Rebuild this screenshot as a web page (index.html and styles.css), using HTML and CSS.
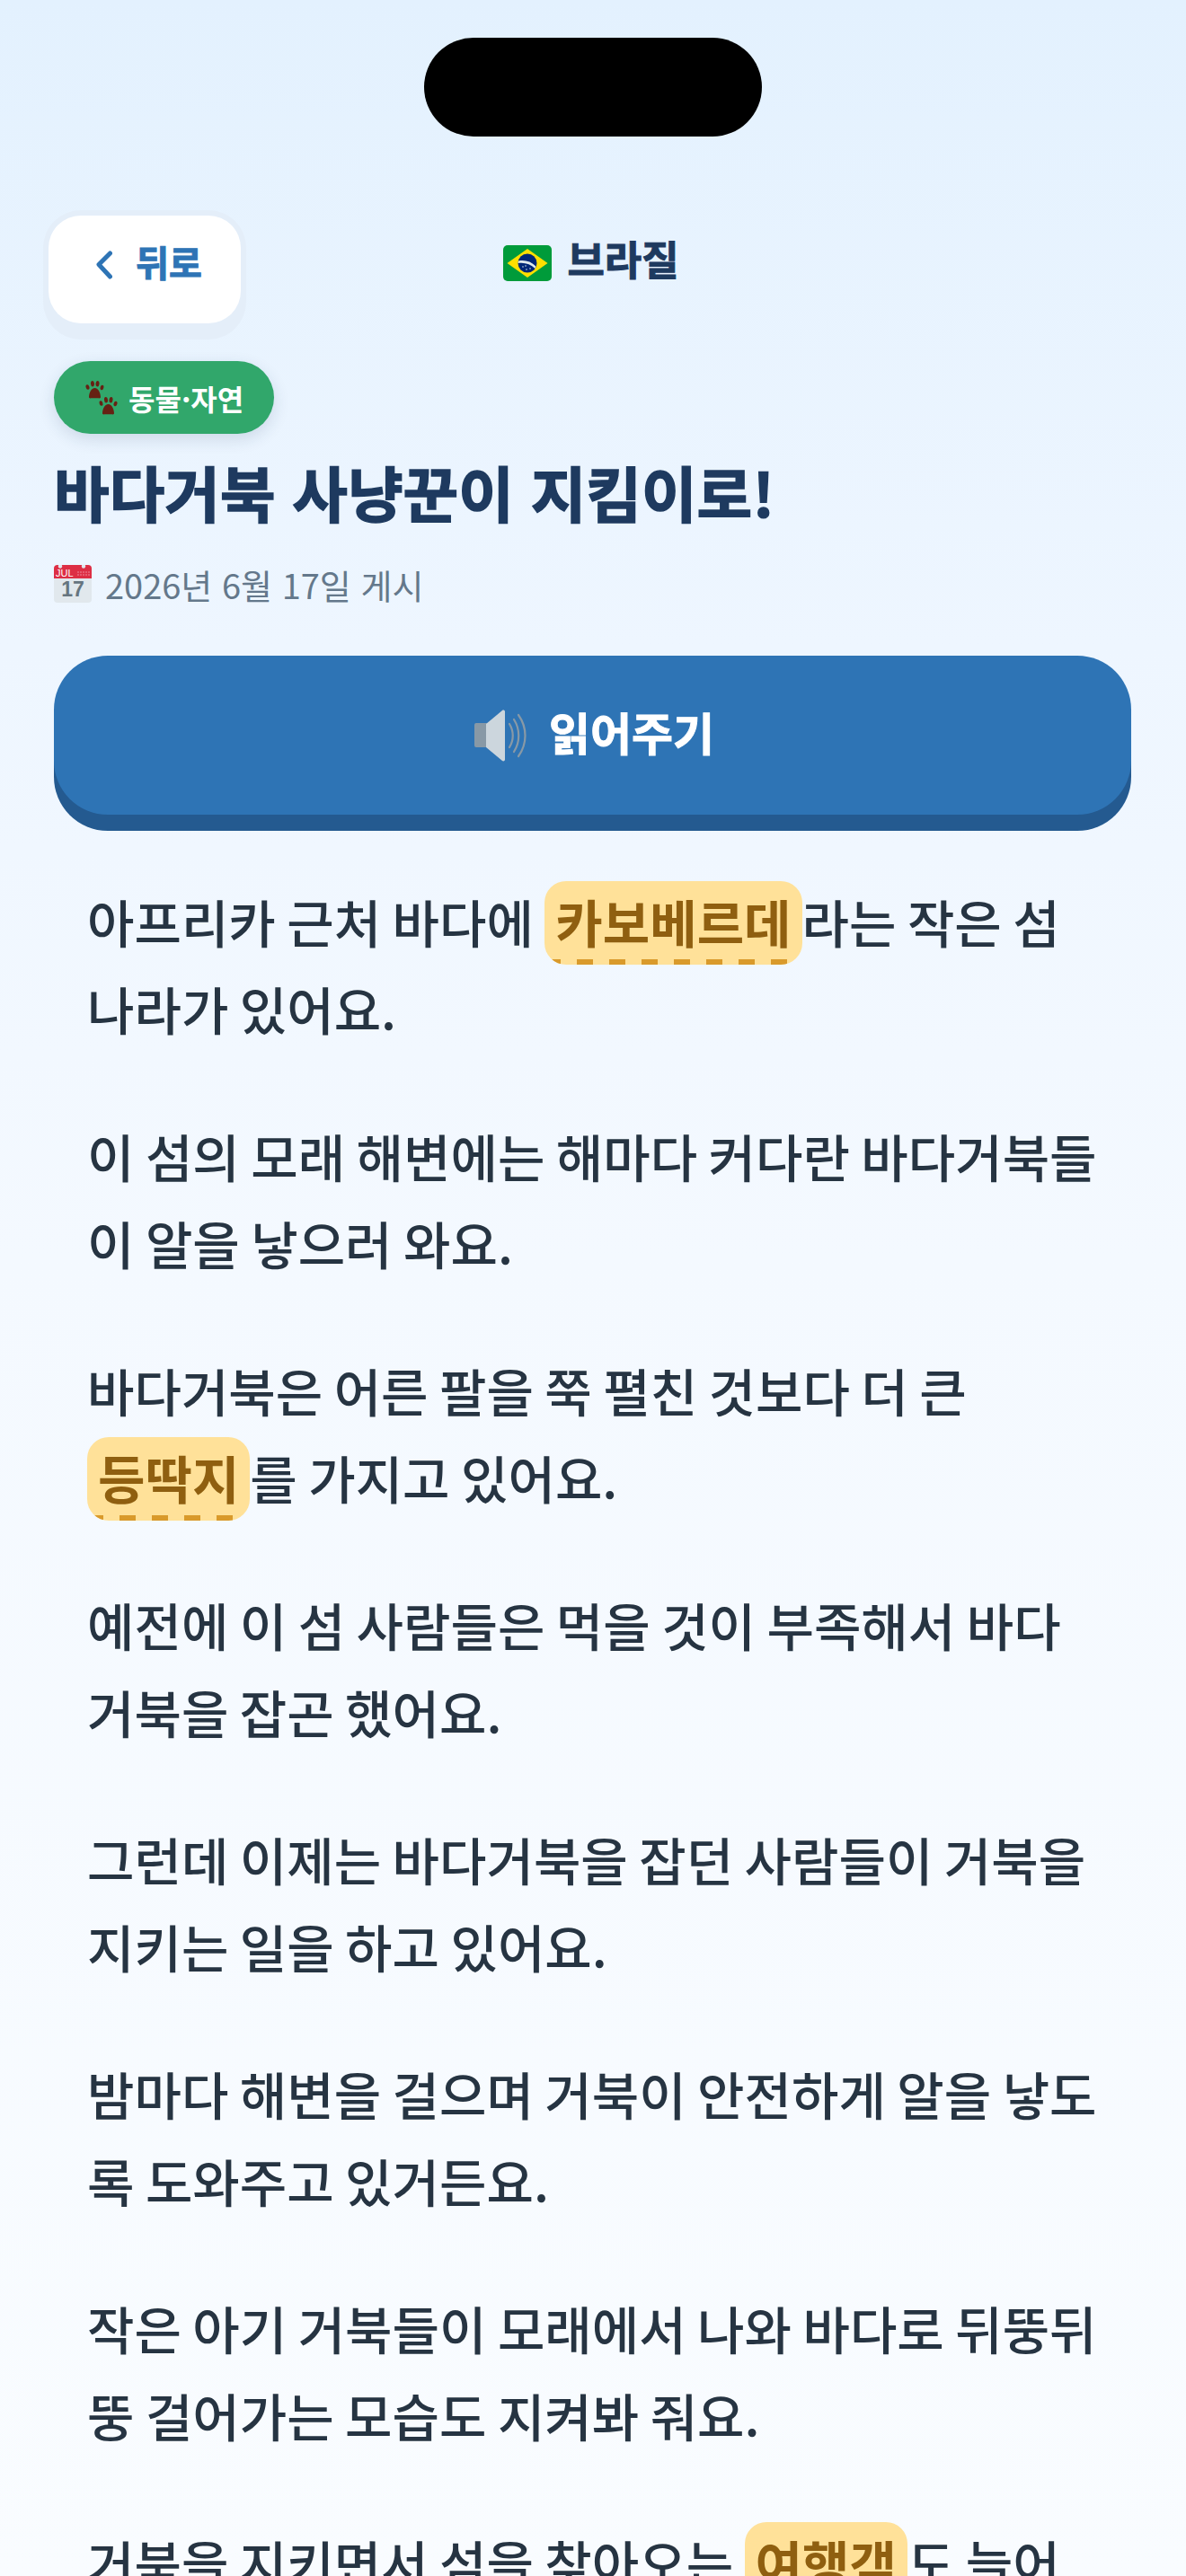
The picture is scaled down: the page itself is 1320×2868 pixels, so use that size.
FILE: index.html
```html
<!DOCTYPE html>
<html lang="ko">
<head>
<meta charset="utf-8">
<title>바다거북 사냥꾼이 지킴이로!</title>
<link rel="stylesheet" href="styles.css">
</head>
<body>
<div class="island"></div>
<main class="page">
  <header class="top">
    <a class="back">
      <svg class="chev" viewBox="0 0 18 32"><path d="M15.5 3 3 15.5 15.5 29"/></svg>
      <span>뒤로</span>
    </a>
    <div class="country">
      <svg class="flag" viewBox="0 0 54 40">
        <rect width="54" height="40" rx="5" fill="#009b3a"/>
        <path d="M27 4 49.500 20 27 36 4.500 20z" fill="#fedf00"/>
        <circle cx="27" cy="20" r="10.500" fill="#002776"/>
        <path d="M17 17.500c7-1.500 14 .5 19.500 6l-1 2.500c-5-5-11.500-7-19-6z" fill="#dfe8ec"/>
        <g fill="#cfe0ea"><circle cx="22" cy="24" r=".8"/><circle cx="26" cy="27" r=".8"/><circle cx="30" cy="26" r=".8"/><circle cx="25" cy="23" r=".8"/></g>
      </svg>
      <span>브라질</span>
    </div>
    <div class="spacer"></div>
  </header>

  <div class="pill">
    <svg class="paw" viewBox="0 0 36 38" fill="#662113">
      <g>
        <ellipse cx="2.500" cy="7" rx="1.900" ry="2.800" transform="rotate(-18 2.500 7)"/>
        <ellipse cx="8" cy="3.200" rx="2" ry="3.200" transform="rotate(-6 8 3.200)"/>
        <ellipse cx="13.500" cy="3.200" rx="2" ry="3.200" transform="rotate(6 13.500 3.200)"/>
        <ellipse cx="18.500" cy="7.500" rx="1.900" ry="2.800" transform="rotate(18 18.500 7.500)"/>
        <path d="M10.500 8c4 0 6.500 6 6.500 10 0 1.500-1 1.500-3 1.300-2-.2-5-.2-7 0-2 .2-3 .2-3-1.300 0-4 2.500-10 6.500-10z"/>
      </g>
      <g transform="translate(15 18)">
        <ellipse cx="2.500" cy="7" rx="1.900" ry="2.800" transform="rotate(-18 2.500 7)"/>
        <ellipse cx="8" cy="3.200" rx="2" ry="3.200" transform="rotate(-6 8 3.200)"/>
        <ellipse cx="13.500" cy="3.200" rx="2" ry="3.200" transform="rotate(6 13.500 3.200)"/>
        <ellipse cx="18.500" cy="7.500" rx="1.900" ry="2.800" transform="rotate(18 18.500 7.500)"/>
        <path d="M10.500 8c4 0 6.500 6 6.500 10 0 1.500-1 1.500-3 1.300-2-.2-5-.2-7 0-2 .2-3 .2-3-1.300 0-4 2.500-10 6.500-10z"/>
      </g>
    </svg>
    <span>동물·자연</span>
  </div>

  <h1 class="title">바다거북 사냥꾼이 지킴이로!</h1>

  <div class="date">
    <svg class="cal" viewBox="0 0 42 42">
      <path d="M0 14h42v24a4 4 0 0 1-4 4H4a4 4 0 0 1-4-4z" fill="#e1e8ed"/>
      <path d="M4 0h34a4 4 0 0 1 4 4v11H0V4a4 4 0 0 1 4-4z" fill="#dd2e44"/>
      <circle cx="7" cy="1.500" r="2.200" fill="#e1e8ed"/><circle cx="33" cy="1.500" r="2.200" fill="#e1e8ed"/>
      <text class="cal-month" x="2" y="13">JUL</text>
      <g fill="#f4abba"><circle cx="27" cy="8" r=".7"/><circle cx="30" cy="8" r=".7"/><circle cx="33" cy="8" r=".7"/><circle cx="36" cy="8" r=".7"/><circle cx="39" cy="8" r=".7"/><circle cx="27" cy="11" r=".7"/><circle cx="30" cy="11" r=".7"/><circle cx="33" cy="11" r=".7"/><circle cx="36" cy="11" r=".7"/><circle cx="39" cy="11" r=".7"/></g>
      <text class="cal-day" x="21" y="35">17</text>
    </svg>
    <span>2026년 6월 17일 게시</span>
  </div>

  <button class="read">
    <svg class="speaker" viewBox="0 0 60 58">
      <rect x="0" y="15" width="16" height="27" rx="2" fill="#8899a6"/>
      <path d="M13 16 31 1c1-1 3-.5 3 1.500v53c0 2-2 2.500-3 1.500L13 42z" fill="#ccd6dd"/>
      <g fill="none" stroke="#8899a6" stroke-width="2.200" stroke-linecap="round">
        <path d="M39 16c5 8 5 18 0 26"/>
        <path d="M44 11c7 11 7 25 0 36"/>
        <path d="M49 6c10 14 10 32 0 46"/>
      </g>
    </svg>
    <span>읽어주기</span>
  </button>

  <article class="story">
    <p>아프리카 근처 바다에 <mark class="word">카보베르데</mark>라는 작은 섬나라가 있어요.</p>
    <p>이 섬의 모래 해변에는 해마다 커다란 바다거북들이 알을 낳으러 와요.</p>
    <p>바다거북은 어른 팔을 쭉 펼친 것보다 더 큰 <mark class="word">등딱지</mark>를 가지고 있어요.</p>
    <p>예전에 이 섬 사람들은 먹을 것이 부족해서 바다거북을 잡곤 했어요.</p>
    <p>그런데 이제는 바다거북을 잡던 사람들이 거북을 지키는 일을 하고 있어요.</p>
    <p>밤마다 해변을 걸으며 거북이 안전하게 알을 낳도록 도와주고 있거든요.</p>
    <p>작은 아기 거북들이 모래에서 나와 바다로 뒤뚱뒤뚱 걸어가는 모습도 지켜봐 줘요.</p>
    <p>거북을 지키면서 섬을 찾아오는 <mark class="word">여행객</mark>도 늘어났어요.</p>
  </article>
</main>
</body>
</html>
```

FILE: styles.css
```css
* { box-sizing: border-box; }
html, body { margin: 0; padding: 0; }
body {
  width: 1320px;
  height: 2868px;
  overflow: hidden;
  position: relative;
  font-family: "Noto Sans CJK KR", "Noto Sans", sans-serif;
  background: linear-gradient(180deg, #e3f1fe 0, #eef6ff 720px, #f4f9ff 1400px, #f9fcff 2868px);
  color: #263442;
}
.island {
  position: absolute;
  left: 472px;
  top: 42px;
  width: 376px;
  height: 110px;
  border-radius: 55px;
  background: #000;
}
.page { padding: 240px 61px 0 60px; }

.top { display: flex; justify-content: space-between; align-items: flex-start; margin: 0 -6px; }
.back {
  width: 214px;
  height: 120px;
  background: #fff;
  border-radius: 36px;
  display: flex;
  align-items: flex-start;
  justify-content: center;
  gap: 26px;
  padding: 22px 0 0 10px;
  color: #2e74b5;
  font-size: 40px;
  font-weight: 700;
  line-height: 58px;
  -webkit-text-stroke: 1px #2e74b5;
  box-shadow: 0 0 0 6px #e4eef9, 0 12px 0 6px #e4eef9;
}
.chev { width: 18px; height: 32px; margin-top: 17px; }
.chev path { fill: none; stroke: #2e74b5; stroke-width: 5px; stroke-linecap: round; stroke-linejoin: round; }
.country {
  display: flex;
  align-items: flex-start;
  gap: 17px;
  margin-top: 18px;
  margin-left: -3px;
  color: #1e3a5f;
  font-size: 45px;
  font-weight: 700;
  line-height: 60px;
  -webkit-text-stroke: 1px #1e3a5f;
}
.flag { width: 54px; height: 40px; margin-top: 15px; }
.spacer { width: 214px; }

.pill {
  width: 245px;
  height: 81px;
  margin-top: 42px;
  border-radius: 41px;
  background: #31a76b;
  color: #fff;
  display: flex;
  align-items: center;
  gap: 12px;
  padding-left: 35px;
  font-size: 32px;
  font-weight: 700;
  box-shadow: 0 6px 18px rgba(30, 58, 95, .14);
}
.paw { width: 36px; height: 38px; }

.title {
  margin: 16px 0 0;
  height: 96px;
  color: #1e3a5f;
  font-size: 67px;
  font-weight: 700;
  line-height: 96px;
  letter-spacing: 0;
  white-space: nowrap;
  -webkit-text-stroke: 1.5px #1e3a5f;
}
.date {
  display: flex;
  align-items: center;
  gap: 15px;
  margin-top: 26px;
  height: 60px;
  color: #64788b;
  font-size: 38px;
  line-height: 60px;
}
.cal { width: 42px; height: 42px; margin-top: -2px; }
.cal-month { font-family: "Liberation Sans", sans-serif; font-size: 11px; fill: #fff; }
.cal-day { font-family: "Liberation Sans", sans-serif; font-size: 23px; font-weight: 700; fill: #66757f; text-anchor: middle; }

.read {
  display: flex;
  align-items: flex-start;
  justify-content: center;
  gap: 23px;
  width: 1199px;
  height: 177px;
  margin: 49px 0 0;
  padding: 60px 0 0 4px;
  border: 0;
  border-radius: 60px;
  background: #2e74b5;
  color: #fff;
  font-family: inherit;
  font-size: 50px;
  font-weight: 700;
  line-height: 48px;
  -webkit-text-stroke: 1px #fff;
  box-shadow: 0 18px 0 #245a90;
}
.speaker { width: 60px; height: 58px; }

.story { margin-top: 70px; padding: 0 37px; }
.story p {
  margin: 0 0 67px;
  font-size: 57px;
  line-height: 97px;
  font-weight: 500;
  word-spacing: -3.5px;
}
.word {
  background: repeating-linear-gradient(90deg, #d99a2b 0 18px, transparent 18px 36px) left bottom / 100% 6px no-repeat, #ffe199;
  color: #8f5f10;
  font-weight: 700;
  padding: 3px 12px 8px;
  border-radius: 24px;
  white-space: nowrap;
}
```
